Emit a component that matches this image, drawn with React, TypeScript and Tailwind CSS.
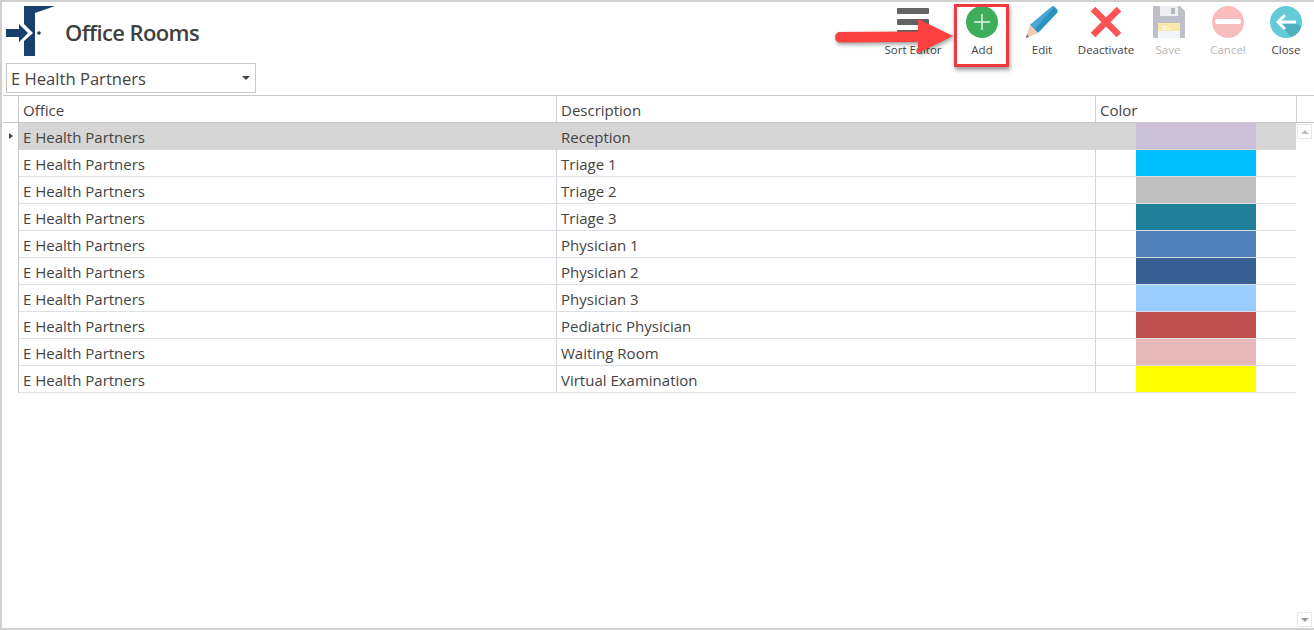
import React from 'react';

const rows = [
    { name: 'Reception', color: 'bg-[#ccc0d9]' },
    { name: 'Triage 1', color: 'bg-[#00bfff]' },
    { name: 'Triage 2', color: 'bg-[#bfbfbf]' },
    { name: 'Triage 3', color: 'bg-[#1f7f99]' },
    { name: 'Physician 1', color: 'bg-[#4f81bd]' },
    { name: 'Physician 2', color: 'bg-[#366092]' },
    { name: 'Physician 3', color: 'bg-[#99ccff]' },
    { name: 'Pediatric Physician', color: 'bg-[#c0504d]' },
    { name: 'Waiting Room', color: 'bg-[#e6b8b7]' },
    { name: 'Virtual Examination', color: 'bg-[#ffff00]' },
];

const Logo = () => (
    <svg width="50" height="52" viewBox="0 0 50 52" className="shrink-0">
        <path d="M18 0H49L29 7V50H18V35L27 27L18 18Z" fill="#17406d" />
        <path d="M0 23H13V18L22 27L13 36V31H0Z" fill="#17406d" />
        <circle cx="33" cy="27" r="1.8" fill="#17406d" />
    </svg>
);

const SortIcon = () => (
    <svg width="32" height="32" viewBox="0 0 32 32">
        <rect y="2" width="32" height="6" rx="1" fill="#636363" />
        <rect y="13" width="32" height="6" rx="1" fill="#636363" />
        <rect y="24" width="32" height="6" rx="1" fill="#636363" />
    </svg>
);

const AddIcon = () => (
    <svg width="32" height="32" viewBox="0 0 32 32">
        <circle cx="16" cy="16" r="16" fill="#3fae5a" />
        <path d="M16 8V24M8 16H24" stroke="#dff3e4" strokeWidth="1.5" />
    </svg>
);

const EditIcon = () => (
    <svg width="32" height="32" viewBox="0 0 32 32">
        <path d="M4 19L26 0.5Q27.5 0 29 1L31.5 4Q32 5.5 31 7L12 27Z" fill="#2a93c0" />
        <path d="M4 19L26 0.5Q27.5 0 28 1L9 23Z" fill="#4aa6d2" />
        <path d="M4 19L12 27L0 32Z" fill="#f3c9b4" />
        <path d="M2.5 31L0 32L1 28Z" fill="#555" />
    </svg>
);

const DeactivateIcon = () => (
    <svg width="32" height="32" viewBox="0 0 32 32">
        <path d="M3 3L29 29M29 3L3 29" stroke="#ff5252" strokeWidth="6.5" />
    </svg>
);

const SaveIcon = () => (
    <svg width="32" height="32" viewBox="0 0 32 32" className="ml-[2px]">
        <path d="M0 0H27L32 5V32H0Z" fill="#bdbfc9" />
        <rect x="7" y="0" width="18" height="10" fill="#eeeef2" />
        <rect x="18" y="2" width="4" height="6" fill="#b5b7c2" />
        <rect x="5" y="17" width="22" height="15" fill="#f2f4f7" />
        <rect x="5" y="17" width="22" height="8" fill="#f9e7ab" />
        <path d="M9 20.5H14M9 23H17" stroke="#fff" strokeWidth="1.1" />
    </svg>
);

const CancelIcon = () => (
    <svg width="32" height="32" viewBox="0 0 32 32">
        <circle cx="16" cy="16" r="16" fill="#f8bcbd" />
        <rect x="3" y="13" width="26" height="5" rx="2" fill="#fff" />
    </svg>
);

const CloseIcon = () => (
    <svg width="32" height="32" viewBox="0 0 32 32">
        <circle cx="16" cy="16" r="16" fill="#62cbd6" />
        <path d="M10 18H26L31.5 20A16 16 0 0 1 21 31.2Z" fill="#4fb0bd" />
        <path d="M8 16H26M15 9L8 16L15 23" stroke="#fff" strokeWidth="3" fill="none" />
    </svg>
);

const tools = [
    { label: 'Sort Editor', icon: <SortIcon />, width: 'w-[60px]', text: 'text-[#444]' },
    { label: 'Add', icon: <AddIcon />, width: 'w-[78px]', text: 'text-[#444]' },
    { label: 'Edit', icon: <EditIcon />, width: 'w-[42px]', text: 'text-[#444]' },
    { label: 'Deactivate', icon: <DeactivateIcon />, width: 'w-[86px]', text: 'text-[#444]' },
    { label: 'Save', icon: <SaveIcon />, width: 'w-[38px]', text: 'text-[#b5b5b5]' },
    { label: 'Cancel', icon: <CancelIcon />, width: 'w-[82px]', text: 'text-[#b5b5b5]' },
    { label: 'Close', icon: <CloseIcon />, width: 'w-[34px]', text: 'text-[#444]' },
];

const App = () => {
    return (
        <div className="relative w-[1314px] h-[630px] bg-white border-t-2 border-l-2 border-b-2 border-[#d0d0d0] overflow-hidden font-['Open_Sans',sans-serif] text-[#444]">
            <div className="flex h-[60px]">
                <div className="ml-[4px] mt-[4px]">
                    <Logo />
                </div>
                <h1 className="ml-[9px] mt-[16px] text-[22px] leading-[28px] font-semibold text-[#404040] tracking-[-0.6px]">Office Rooms</h1>
                <div className="ml-auto mr-[11px] flex">
                    {tools.map(tool => (
                        <div key={tool.label} className={`${tool.width} flex flex-col items-center pt-[4px]`}>
                            <div className="h-[32px]">{tool.icon}</div>
                            <span className={`mt-[4px] text-[11.5px] leading-[16px] whitespace-nowrap ${tool.text}`}>{tool.label}</span>
                        </div>
                    ))}
                </div>
            </div>

            <div className="ml-[4px] mt-[1px] w-[250px] h-[30px] border border-[#c8c8c8] flex items-center justify-between pl-[4px] pr-[5px]">
                <span className="text-[16.6px] leading-[30px] mt-[1px]">E Health Partners</span>
                <span className="w-0 h-0 border-x-[4px] border-x-transparent border-t-[4px] border-t-[#444]" />
            </div>

            <div className="ml-[1px] mt-[2px] border-t border-[#c8c8c8] text-[15px]">
                <div className="flex h-[27px] border-b border-[#c8c8c8]">
                    <div className="w-[16px] border-r border-[#c8c8c8]" />
                    <div className="w-[538px] border-r border-[#d4d4d4] pl-[4px] leading-[28px]">Office</div>
                    <div className="w-[539px] border-r border-[#d4d4d4] pl-[4px] leading-[28px]">Description</div>
                    <div className="w-[201px] border-r border-[#d4d4d4] pl-[4px] leading-[28px]">Color</div>
                </div>
                <div className="flex">
                    <div className="w-[15px] flex justify-center pt-[10px]">
                        <span className="h-0 w-0 border-y-[3px] border-y-transparent border-l-[4px] border-l-[#444]" />
                    </div>
                    <div className="w-[1278px] border-l border-[#c8c8c8]">
                        {rows.map((row, i) => (
                            <div key={row.name} className={`flex h-[27px] border-b ${i === 0 ? 'bg-[#d6d6d6] border-[#d6d6d6]' : 'border-[#dcdfe3]'}`}>
                                <div className={`w-[538px] border-r pl-[4px] leading-[28px] ${i === 0 ? 'border-[#d6d6d6]' : 'border-[#cfd6dd]'}`}>E Health Partners</div>
                                <div className={`w-[539px] border-r pl-[4px] leading-[28px] ${i === 0 ? 'border-[#d6d6d6]' : 'border-[#cfd6dd]'}`}>{row.name}</div>
                                <div className="flex-1 pl-[40px]">
                                    <div className={`w-[120px] h-[26px] ${row.color}`} />
                                </div>
                            </div>
                        ))}
                    </div>
                </div>
            </div>

            {/* scrollbar buttons */}
            <div className="absolute right-[2px] top-[122px] w-[15px] h-[15px] border border-[#e8e8e8] flex items-center justify-center">
                <span className="w-0 h-0 border-x-[4px] border-x-transparent border-b-[4px] border-b-[#bdbdbd]" />
            </div>
            <div className="absolute right-[2px] bottom-[1px] w-[15px] h-[15px] border border-[#e8e8e8] flex items-center justify-center">
                <span className="w-0 h-0 border-x-[4px] border-x-transparent border-t-[4px] border-t-[#9a9a9a]" />
            </div>

            {/* annotation: red box and arrow */}
            <div className="absolute left-[952px] top-[2px] w-[55px] h-[63px] border-[3px] border-[#f0383f] shadow-[1px_3px_4px_rgba(0,0,0,0.4)]" />
            <svg className="absolute left-[830px] top-[14px] drop-shadow-[1px_2px_2px_rgba(0,0,0,0.4)]" width="126" height="50" viewBox="0 0 126 50">
                <path d="M8 16L86 15.5V3L121 20L86 37V26L8 26.5C1.5 26.5 1.5 16 8 16Z" fill="#fb4040" />
            </svg>
        </div>
    );
};

export default App;
